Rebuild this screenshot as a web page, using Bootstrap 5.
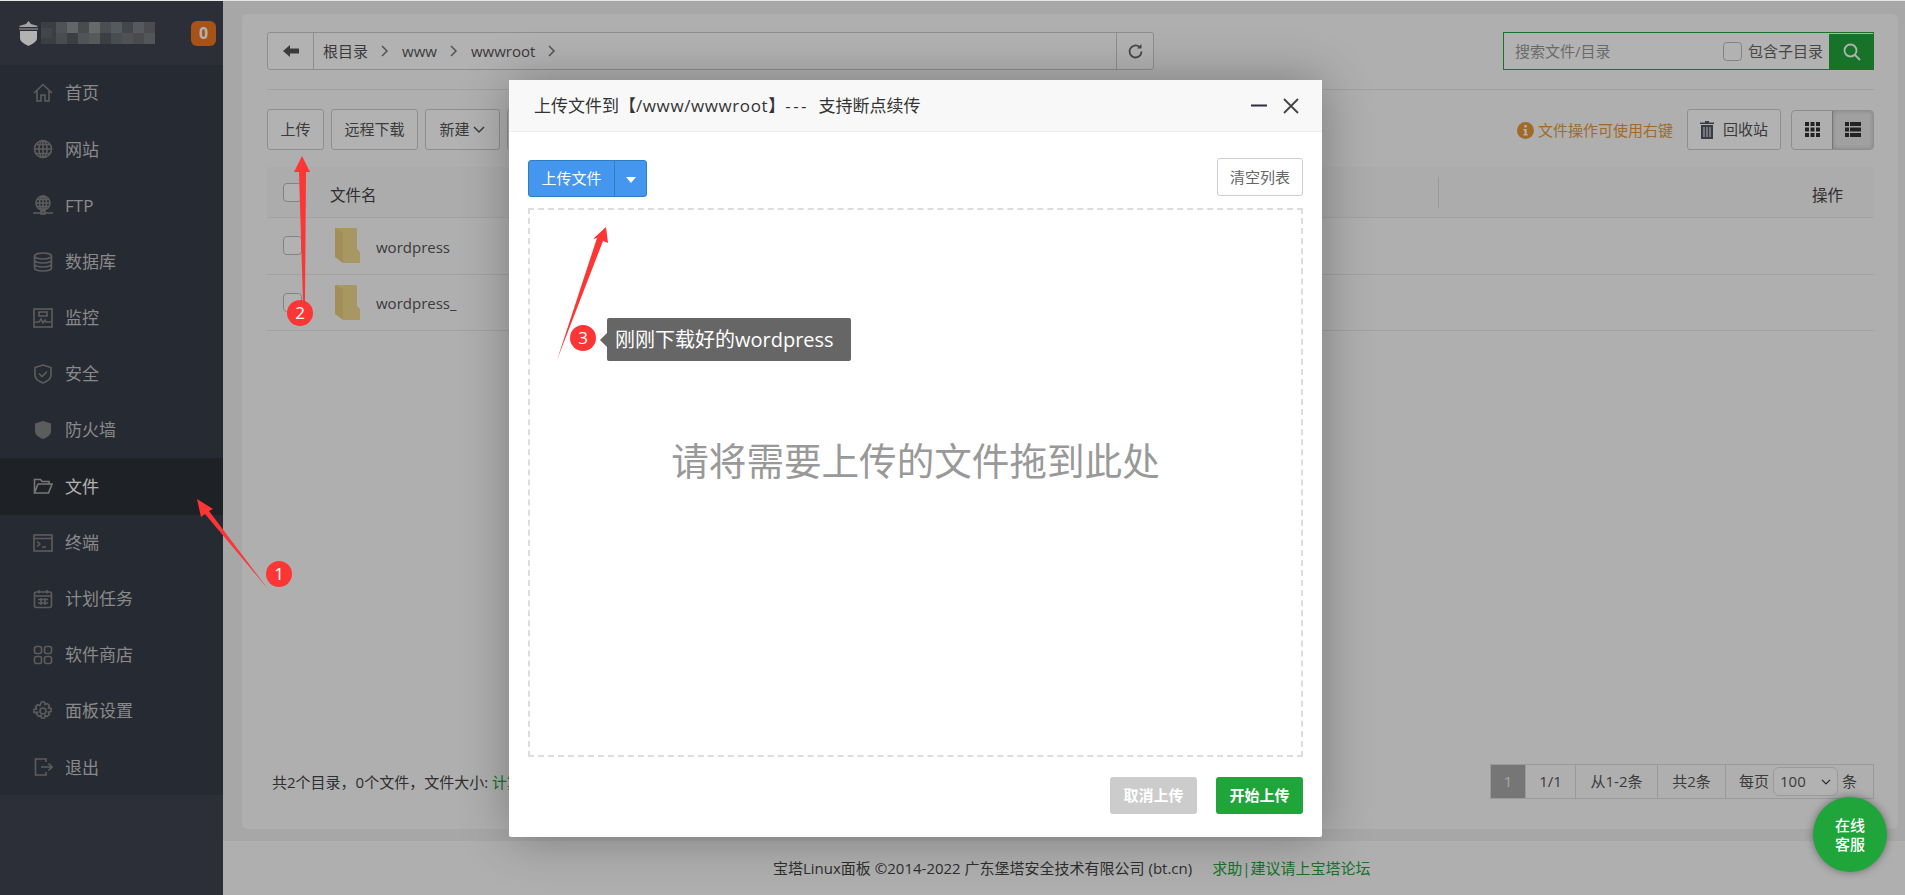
<!DOCTYPE html>
<html lang="zh">
<head>
<meta charset="utf-8">
<title>宝塔Linux面板</title>
<link href="https://cdn.jsdelivr.net/npm/bootstrap@5.3.0/dist/css/bootstrap.min.css" rel="stylesheet">
<style>
html,body{height:100%;margin:0;overflow:hidden}
body{font-family:"Open Sans","Noto Sans CJK SC",sans-serif;font-size:15px;color:#555}
.shell{width:1905px;height:895px;position:relative;border-top:1px solid #e6e6e6;overflow:hidden}
.side{width:223px;background:#3f4450}
.logo-bar{height:64px;padding:0 7px 0 17px}
.logo-mosaic{width:114px;height:22px;margin-left:1px;display:block;filter:brightness(1.15)}
.count{width:25px;height:25px;border-radius:6px;background:#f07620;color:#fff;font-weight:700;font-size:16px}
.menu{background:#373d49}
.menu-item{height:56.2px;padding-left:33px;gap:12px;color:#c4c4c4;font-size:17px;text-decoration:none}
.menu-item svg{width:20px;height:20px;flex:none;fill:none;stroke:#858585;stroke-width:1.6}
.menu-item.on{background:#2c3037;color:#fff}
.menu-item.on svg{stroke:#aaa}
.main-col{min-width:0;background:#f0f0f0}
.paper{margin:13px 7px 12px 19px;background:#fbfbfb;border-radius:6px;padding:18px 24px 30px 25px}
.path-box{width:887px;height:38px;border:1px solid #ccc;border-radius:3px;background:#fff}
.path-back{width:46px;border-right:1px solid #ccc}
.path-crumb{padding-left:9px;gap:13px;color:#555;font-size:15px}
.path-crumb svg{width:8px;height:12px;fill:none;stroke:#777;stroke-width:1.5}
.path-reload{width:37px;border-left:1px solid #ccc}
.seek{width:371px;height:38px;border:1px solid #20a53a;background:#fff}
.seek-hint{padding-left:11px;color:#999}
.seek-sub{gap:6px;padding-right:6px;color:#666}
.tick{width:19px;height:19px;margin:0;border:1px solid #bbb;border-radius:3px;flex:none}
.seek-go{width:45px;margin:1px -1px -1px 0;background:#20a53a}
.rule{border-top:1px solid #e6e6e6;margin:19px 0}
.tool-row{gap:7px}
.tool-btn{height:41px;border:1px solid #ccc;border-radius:3px;background:#fff;color:#555;font-size:15px;padding:0;display:flex;align-items:center;justify-content:center}
.w57{width:57px}.w87{width:87px}.w75{width:75px}.w94{width:94px;gap:9px}
.tips{color:#e69a3a;gap:4px;margin-right:14px;padding-top:2px}
.views{height:40px;width:83px;margin-left:10px;border:1px solid #ccc;border-radius:4px;overflow:hidden}
.views span{flex:1;height:100%}
.views .cur{background:#e6e6e6;border-left:1px solid #aaa;box-shadow:inset 0 0 4px rgba(0,0,0,.2)}
.files{margin-top:17px}
.files-head{height:51px;background:#f6f6f6;border-bottom:1px solid #e8e8e8;color:#444;font-size:15.5px}
.files-row{height:56.5px;border-bottom:1px solid #e8e8e8;color:#555}
.cell-tick{width:63px;padding-left:16px}
.head-txt{padding-top:8px}
.head-gap{border-left:1px solid #ddd;height:31px;margin-left:1061px}
.op{margin-left:auto;margin-right:31px}
.file-name{margin-left:16px;padding-top:2px}
.folder{width:25px;height:35px;margin-left:5px;flex:none}
.foot-bar{margin-top:auto;padding-left:5px;color:#444}
.foot-note{padding-top:2px}
.green{color:#20a53a}
.pager{height:35px;width:384px;border:1px solid #ddd;color:#555}
.pager>span{border-right:1px solid #ddd;height:100%;display:flex;align-items:center;justify-content:center}
.pager>span:last-child{border-right:0;flex:1;gap:4px;justify-content:flex-start;padding-left:13px}
.pg-now{width:35px;background:#aaa;color:#eee}
.w50{width:50px}.w82{width:82px}.w68{width:68px}
.pg-select{width:65px;height:29px;padding:0 0 0 6px;font-size:15px;color:#555;border-color:#ddd;background-position:right 5px center;background-size:12px 10px}
.page-foot{height:54px;background:#fbfbfb;color:#444;gap:20px;padding-left:550px}
.shade{position:absolute;inset:0;background:rgba(0,0,0,.3)}
.win{position:absolute;left:509px;top:79px;width:813px;height:757px;background:#fff;box-shadow:1px 1px 50px rgba(0,0,0,.3);border-radius:2px}
.win-head{height:52px;background:#f8f8f8;border-bottom:1px solid #eee;padding:0 23px 0 25px;color:#333;font-size:17px;word-spacing:5px}
.title-path{letter-spacing:.6px}
.title-dash{letter-spacing:2.500px}
.win-body{padding:26px 19px 23px}
.win-tools{height:39px}
.up-btn{height:37px;background:#4596ee;border:1px solid #2e7fc1;color:#fff;font-size:15px;padding:0;border-radius:3px}
.up-main{width:87px;border-right-color:#2e7fc1}
.up-caret{width:33px}
.clear-btn{width:86px;height:38px;margin-bottom:1px;padding:0;border:1px solid #ccc;border-radius:3px;background:#fff;color:#666;font-size:15px}
.drop{margin-top:11px;border:2px dashed #ddd;color:#999;font-size:37.6px;padding-bottom:42px}
.win-foot{margin-top:20px;height:37px;gap:19px}
.act{width:87px;height:37px;padding:0;border:0;border-radius:3px;color:#fff;font-weight:700;font-size:15px}
.act-off{background:#ccc}.act-go{background:#20a53a}
.marks{position:absolute;left:0;top:-1px;width:1905px;height:895px;pointer-events:none}
.tip{position:absolute;left:607px;top:317px;width:244px;height:43px;background:#666;color:#fff;font-size:20px;border-radius:2px;padding-left:8px}
.tip::before{content:"";position:absolute;left:-7px;top:15px;border:7px solid transparent;border-left:0;border-right-color:#666}
.chat{position:absolute;left:1813px;top:796px;width:74px;height:75px;border-radius:50%;background:#20a53a;color:#fff;font-size:15px;line-height:19px;font-weight:500;box-shadow:0 0 8px rgba(0,0,0,.4)}
</style>
</head>
<body>
<div class="shell d-flex">
  <aside class="side flex-shrink-0">
    <div class="logo-bar d-flex align-items-center">
      <svg width="23" height="25" viewBox="0 0 23 25"><path d="M11.500 0 14 3l7 2-1 1H3L2 5l7-2z" fill="#e8e8e8"/><path d="M2 7.500h19v1H2z" fill="#e8e8e8"/><path d="M3 10h17v7c0 4-5 6-8.500 8C8 23 3 21 3 17z" fill="#fff"/></svg>
      <svg class="logo-mosaic" viewBox="0 0 114 22">
        <rect width="114" height="22" fill="#4a4f55"/>
        <rect x="0" y="6" width="11" height="10" fill="#53585e"/><rect x="15" y="0" width="11" height="11" fill="#62676b"/><rect x="26" y="0" width="11" height="11" fill="#7b7f80"/><rect x="37" y="0" width="11" height="11" fill="#5a5f62"/><rect x="48" y="0" width="11" height="11" fill="#808483"/><rect x="59" y="0" width="11" height="11" fill="#5e6366"/><rect x="70" y="0" width="11" height="11" fill="#697075"/><rect x="81" y="0" width="11" height="11" fill="#54585c"/><rect x="92" y="0" width="11" height="11" fill="#6c7074"/><rect x="103" y="0" width="11" height="11" fill="#5d6064"/>
        <rect x="15" y="11" width="11" height="11" fill="#5c6064"/><rect x="37" y="11" width="11" height="11" fill="#65696c"/><rect x="48" y="11" width="11" height="11" fill="#6c7071"/><rect x="70" y="11" width="11" height="11" fill="#596166"/><rect x="81" y="11" width="11" height="11" fill="#63666a"/><rect x="92" y="11" width="11" height="11" fill="#5b5e62"/><rect x="103" y="11" width="11" height="11" fill="#686b6e"/>
      </svg>
      <span class="count ms-auto d-flex align-items-center justify-content-center">0</span>
    </div>
    <nav class="menu d-flex flex-column">
      <a class="menu-item d-flex align-items-center" href="#"><svg viewBox="0 0 20 20"><path d="M1 10 10 1.500 19 10M4 8v10h4v-6h4v6h4V8"/></svg>首页</a>
      <a class="menu-item d-flex align-items-center" href="#"><svg viewBox="0 0 20 20"><circle cx="10" cy="10" r="8.500"/><ellipse cx="10" cy="10" rx="4" ry="8.500"/><path d="M10 1.500v17M1.500 10h17M3 5.500h14M3 14.500h14"/></svg>网站</a>
      <a class="menu-item d-flex align-items-center" href="#"><svg viewBox="0 0 20 20"><circle cx="10" cy="8" r="7"/><ellipse cx="10" cy="8" rx="3.500" ry="7"/><path d="M10 1v14M3 8h14M4 4.500h12M4 11.500h12M0 18h20"/><rect x="8" y="16" width="4" height="3"/></svg>FTP</a>
      <a class="menu-item d-flex align-items-center" href="#"><svg viewBox="0 0 20 20"><ellipse cx="10" cy="4" rx="8.500" ry="3"/><path d="M1.500 4v12c0 1.700 3.800 3 8.500 3s8.500-1.300 8.500-3V4M1.500 8c0 1.700 3.800 3 8.500 3s8.500-1.300 8.500-3M1.500 12c0 1.700 3.800 3 8.500 3s8.500-1.300 8.500-3"/></svg>数据库</a>
      <a class="menu-item d-flex align-items-center" href="#"><svg viewBox="0 0 20 20"><rect x="1" y="1" width="18" height="18"/><path d="M2 14h4l2-3 2 4 2-3 1 2h5M6 4h8v4H6z"/></svg>监控</a>
      <a class="menu-item d-flex align-items-center" href="#"><svg viewBox="0 0 20 20"><path d="M10 1 18 3.500V11c0 4-4 6.500-8 8-4-1.500-8-4-8-8V3.500z"/><path d="m6 9.500 3 3 5-5"/></svg>安全</a>
      <a class="menu-item d-flex align-items-center" href="#"><svg viewBox="0 0 20 20"><path d="M10 1l8 2.500V11c0 4-4 6.500-8 8-4-1.500-8-4-8-8V3.500z" fill="#858585" stroke="none"/></svg>防火墙</a>
      <a class="menu-item on d-flex align-items-center" href="#"><svg viewBox="0 0 20 20"><path d="M1.500 17V3.500h6l1.500 2h7v2.500M1.500 17h14l3.500-9H5z"/></svg>文件</a>
      <a class="menu-item d-flex align-items-center" href="#"><svg viewBox="0 0 20 20"><rect x="1" y="2" width="18" height="16"/><path d="M1 5.500h18M4 8.500l3 2.500-3 2.500M9 14h4"/></svg>终端</a>
      <a class="menu-item d-flex align-items-center" href="#"><svg viewBox="0 0 20 20"><rect x="1.500" y="3" width="17" height="15.500" rx="2"/><path d="M1.500 7h17M6 1v3.500M14 1v3.500M5 10.500h10M5 14h10M8 9v7M12 9v7"/></svg>计划任务</a>
      <a class="menu-item d-flex align-items-center" href="#"><svg viewBox="0 0 20 20"><rect x="1.500" y="1.500" width="7" height="7" rx="2"/><rect x="11.500" y="1.500" width="7" height="7" rx="2"/><rect x="1.500" y="11.500" width="7" height="7" rx="2"/><rect x="11.500" y="11.500" width="7" height="7" rx="2"/></svg>软件商店</a>
      <a class="menu-item d-flex align-items-center" href="#"><svg viewBox="0 0 20 20"><circle cx="10" cy="10" r="3"/><path d="M8.500 1h3l.6 2.600 2.300-1 2 2-1 2.300 2.600.6v3l-2.600.6 1 2.300-2 2-2.300-1-.6 2.600h-3l-.6-2.600-2.300 1-2-2 1-2.300L1 11.500v-3l2.600-.6-1-2.300 2-2 2.300 1z"/></svg>面板设置</a>
      <a class="menu-item d-flex align-items-center" href="#"><svg viewBox="0 0 20 20"><path d="M13 5V2H2.500v16H13v-3M8 10h11M15.500 6.500 19 10l-3.500 3.500"/></svg>退出</a>
    </nav>
  </aside>

  <div class="main-col flex-grow-1 d-flex flex-column">
    <main class="paper flex-grow-1 d-flex flex-column">
      <div class="d-flex justify-content-between">
        <div class="path-box d-flex">
          <div class="path-back d-flex align-items-center justify-content-center"><svg width="16" height="12" viewBox="0 0 16 12"><path d="M0 6 7 0v3.500h9v5H7V12z" fill="#555"/></svg></div>
          <div class="path-crumb flex-grow-1 d-flex align-items-center"><span>根目录</span><svg viewBox="0 0 8 12"><path d="m1 1 5 5-5 5"/></svg><span>www</span><svg viewBox="0 0 8 12"><path d="m1 1 5 5-5 5"/></svg><span>wwwroot</span><svg viewBox="0 0 8 12"><path d="m1 1 5 5-5 5"/></svg></div>
          <div class="path-reload d-flex align-items-center justify-content-center"><svg width="17" height="17" viewBox="0 0 17 17" fill="none" stroke="#666" stroke-width="1.800"><path d="M14.500 8.500a6 6 0 1 1-2-4.500"/><path d="M14.500 1v4.500H10" fill="#666" stroke="none"/></svg></div>
        </div>
        <div class="seek d-flex">
          <div class="seek-hint flex-grow-1 d-flex align-items-center">搜索文件/目录</div>
          <label class="seek-sub d-flex align-items-center"><input class="form-check-input tick" type="checkbox">包含子目录</label>
          <div class="seek-go d-flex align-items-center justify-content-center"><svg width="18" height="18" viewBox="0 0 18 18" fill="none" stroke="#fff" stroke-width="1.800"><circle cx="7.500" cy="7.500" r="6"/><path d="m12 12 5 5"/></svg></div>
        </div>
      </div>
      <div class="rule"></div>
      <div class="d-flex align-items-start">
        <div class="tool-row d-flex">
          <button class="tool-btn w57" type="button">上传</button>
          <button class="tool-btn w87" type="button">远程下载</button>
          <button class="tool-btn w75" type="button">新建&nbsp;<svg width="12" height="8" viewBox="0 0 12 8" fill="none" stroke="#555" stroke-width="1.500"><path d="m1 1 5 5 5-5"/></svg></button>
          <button class="tool-btn w87" type="button">收藏夹</button>
        </div>
        <div class="ms-auto d-flex align-items-center">
          <span class="tips d-flex align-items-center"><svg width="17" height="17" viewBox="0 0 17 17"><circle cx="8.500" cy="8.500" r="8.500" fill="#e69a3a"/><rect x="7.300" y="3" width="2.400" height="2.400" fill="#fff"/><path d="M6.500 7h3.200v5h1v1.500H6.500V12h1V8.500h-1z" fill="#fff"/></svg>文件操作可使用右键</span>
          <button class="tool-btn w94" type="button"><svg width="14" height="18" viewBox="0 0 14 18"><path d="M5 0h4v1.500h5V3H0V1.500h5zM1 4h12v14H1zM3.500 6v10h1V6zM6.500 6v10h1V6zM9.500 6v10h1V6z" fill="#556" fill-rule="evenodd"/></svg>回收站</button>
          <div class="views d-flex">
            <span class="d-flex align-items-center justify-content-center"><svg width="15" height="15" viewBox="0 0 15 15" fill="#333"><path d="M0 0h4v4H0zM5.500 0h4v4h-4zM11 0h4v4h-4zM0 5.500h4v4H0zM5.500 5.500h4v4h-4zM11 5.500h4v4h-4zM0 11h4v4H0zM5.500 11h4v4h-4zM11 11h4v4h-4z"/></svg></span>
            <span class="cur d-flex align-items-center justify-content-center"><svg width="16" height="15" viewBox="0 0 16 15" fill="#333"><path d="M0 0h4v4H0zM5 0h11v4H5zM0 5.500h4v4H0zM5 5.500h11v4H5zM0 11h4v4H0zM5 11h11v4H5z"/></svg></span>
          </div>
        </div>
      </div>
      <div class="files">
        <div class="files-head d-flex align-items-center">
          <span class="cell-tick d-flex"><input class="form-check-input tick" type="checkbox"></span>
          <span class="head-txt">文件名</span>
          <span class="head-gap"></span>
          <span class="op head-txt">操作</span>
        </div>
        <div class="files-row d-flex align-items-center">
          <span class="cell-tick d-flex"><input class="form-check-input tick" type="checkbox"></span>
          <svg class="folder" viewBox="0 0 25 35"><path d="M0 0h22v21l3 3v11H8z" fill="#f2d98e"/><path d="M0 0l8 4v31L0 29z" fill="#e8cc80"/></svg>
          <span class="file-name">wordpress</span>
        </div>
        <div class="files-row d-flex align-items-center">
          <span class="cell-tick d-flex"><input class="form-check-input tick" type="checkbox"></span>
          <svg class="folder" viewBox="0 0 25 35"><path d="M0 0h22v21l3 3v11H8z" fill="#f2d98e"/><path d="M0 0l8 4v31L0 29z" fill="#e8cc80"/></svg>
          <span class="file-name">wordpress_</span>
        </div>
      </div>
      <div class="foot-bar d-flex align-items-center justify-content-between">
        <span class="foot-note">共2个目录，0个文件，文件大小: <span class="green">计算</span></span>
        <div class="pager d-flex">
          <span class="pg-now">1</span><span class="w50">1/1</span><span class="w82">从1-2条</span><span class="w68">共2条</span>
          <span>每页<select class="form-select pg-select" aria-label="每页"><option>100</option></select>条</span>
        </div>
      </div>
    </main>
    <footer class="page-foot d-flex align-items-center">
      <span>宝塔Linux面板 ©2014-2022 广东堡塔安全技术有限公司 (bt.cn)</span>
      <span class="green">求助|建议请上宝塔论坛</span>
    </footer>
  </div>

  <div class="shade"></div>

  <section class="win d-flex flex-column">
    <header class="win-head d-flex align-items-center">
      <span>上传文件到【<span class="title-path">/www/wwwroot</span>】<span class="title-dash">---</span> 支持断点续传</span>
      <span class="ms-auto d-flex align-items-center gap-3">
        <svg width="16" height="3" viewBox="0 0 16 3"><rect width="16" height="2" y="0.500" fill="#2e2d3c"/></svg>
        <svg width="16" height="16" viewBox="0 0 16 16" fill="none" stroke="#444" stroke-width="1.800"><path d="m1 1 14 14M15 1 1 15"/></svg>
      </span>
    </header>
    <div class="win-body flex-grow-1 d-flex flex-column">
      <div class="win-tools d-flex justify-content-between align-items-end">
        <div class="btn-group">
          <button class="btn up-btn up-main" type="button">上传文件</button>
          <button class="btn up-btn up-caret" type="button"><svg width="10" height="6" viewBox="0 0 10 6"><path d="M0 0h10L5 6z" fill="#fff"/></svg></button>
        </div>
        <button class="clear-btn" type="button">清空列表</button>
      </div>
      <div class="drop flex-grow-1 d-flex align-items-center justify-content-center">请将需要上传的文件拖到此处</div>
      <div class="win-foot d-flex justify-content-end">
        <button class="act act-off" type="button">取消上传</button>
        <button class="act act-go" type="button">开始上传</button>
      </div>
    </div>
  </section>

  <svg class="marks" viewBox="0 0 1905 895">
    <g fill="#fc3535">
      <polygon points="197,499 213,509 209,511 268,589 205,514 201,517"/>
      <polygon points="302,156 310,172 306,172 305,302 303,302 299,172 294,172"/>
      <polygon points="606,227 608,243 603,241 557,360 597,238 593,239"/>
      <circle cx="279" cy="574" r="13"/><circle cx="300" cy="313" r="13"/><circle cx="583" cy="338" r="13"/>
    </g>
    <g fill="#fff" font-size="17" text-anchor="middle" font-family="Open Sans, sans-serif">
      <text x="279" y="580">1</text><text x="300" y="319">2</text><text x="583" y="344">3</text>
    </g>
  </svg>
  <div class="tip d-flex align-items-center">刚刚下载好的wordpress</div>
  <div class="chat d-flex align-items-center justify-content-center text-center">在线<br>客服</div>
</div>
<script src="https://cdn.jsdelivr.net/npm/bootstrap@5.3.0/dist/js/bootstrap.bundle.min.js"></script>
</body>
</html>
